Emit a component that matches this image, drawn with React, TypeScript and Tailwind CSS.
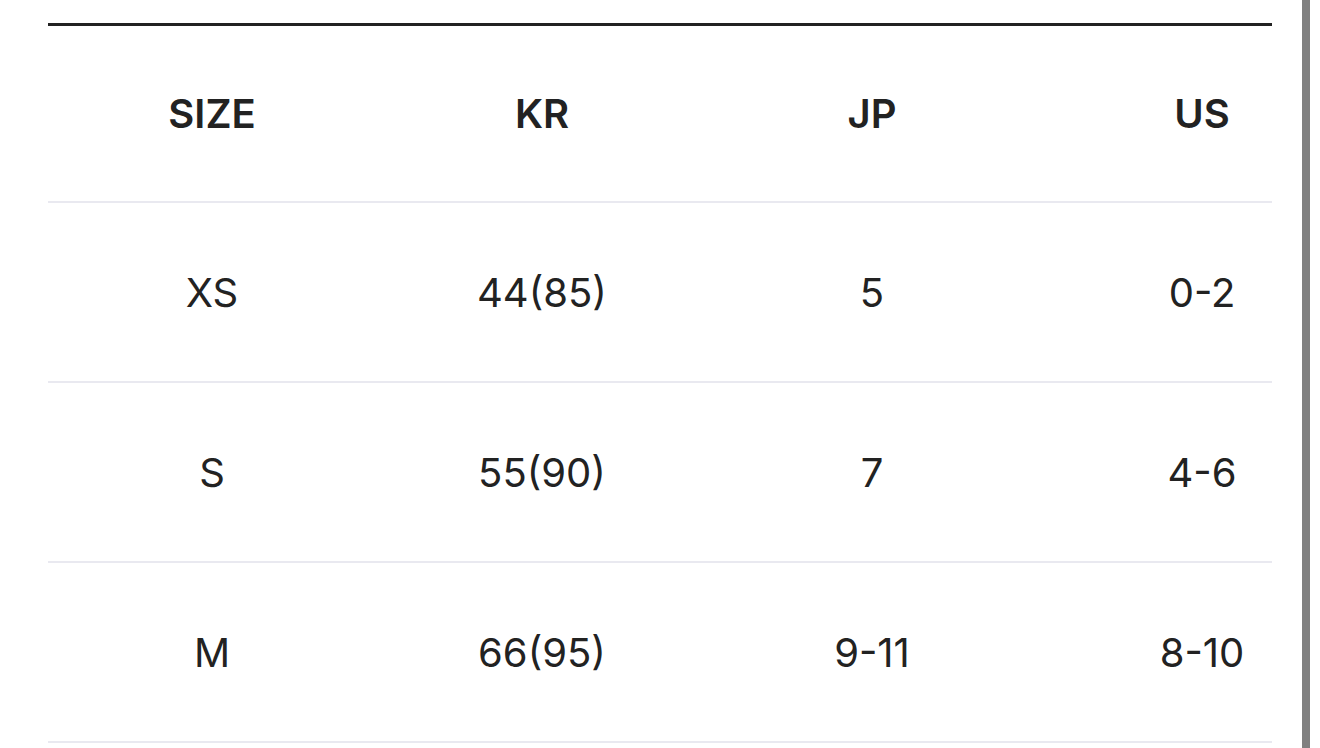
import React from 'react';

const headers = ['SIZE', 'KR', 'JP', 'US'];

const rows: string[][] = [
  ['XS', '44(85)', '5', '0-2'],
  ['S', '55(90)', '7', '4-6'],
  ['M', '66(95)', '9-11', '8-10'],
];

export default function App() {
  return (
    <div className="flex h-[748px] w-[1320px] overflow-hidden bg-white font-['Inter','Liberation_Sans',sans-serif] text-[#222222]">
      <div className="ml-[48px] mt-[23px] w-[1224px] overflow-hidden">
        <div className="w-[1320px] -ml-px">
          <div className="w-[1225px] border-t-[3px] border-[#222222]" />
          <div className="grid h-[175px] grid-cols-[repeat(4,330px)] items-center">
            {headers.map((h) => (
              <div key={h} className="text-center text-[40px] font-semibold leading-none">
                {h}
              </div>
            ))}
          </div>
          {rows.map((row) => (
            <div key={row[0]}>
              <div className="h-[2px] w-[1225px] bg-[#e9e9f0]" />
              <div className="grid h-[178px] grid-cols-[repeat(4,330px)] items-center">
                {row.map((cell, i) => (
                  <div key={i} className="pt-[2px] text-center text-[40px] font-normal leading-none">
                    {cell}
                  </div>
                ))}
              </div>
            </div>
          ))}
          <div className="h-[2px] w-[1225px] bg-[#e9e9f0]" />
        </div>
      </div>
      <div className="ml-[30px] h-full w-[8px] bg-[#808080]" />
    </div>
  );
}
